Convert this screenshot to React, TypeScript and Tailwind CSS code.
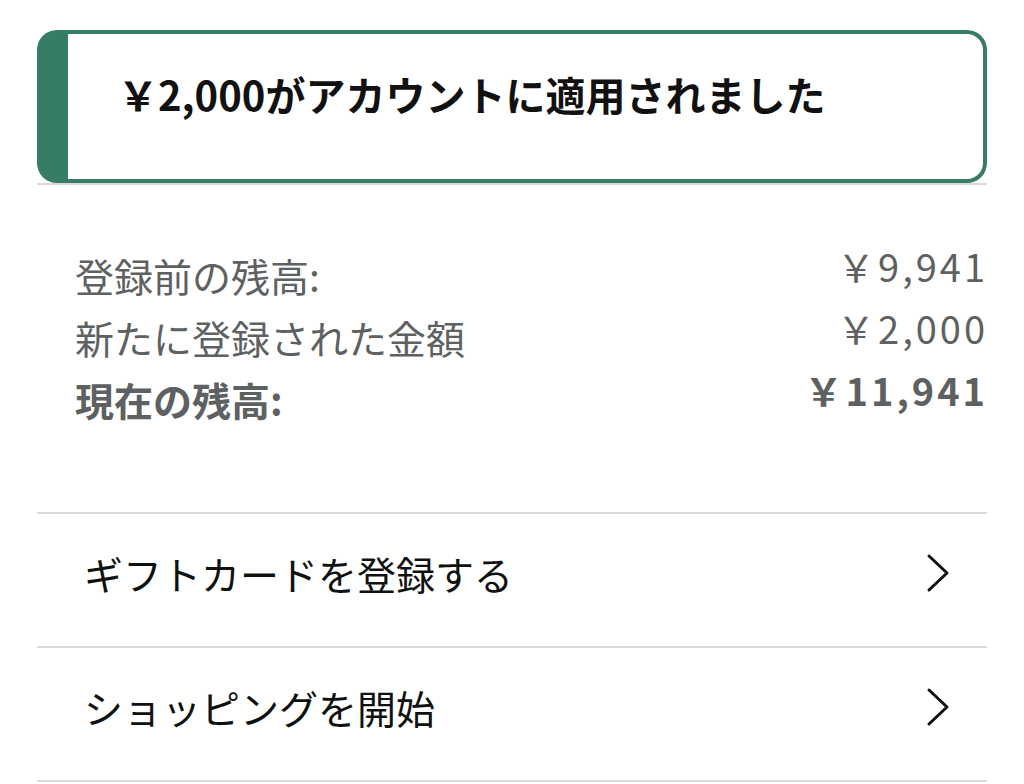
import { ReactNode } from 'react';

const font = { fontFamily: '"Noto Sans CJK JP", "Noto Sans", sans-serif' };

function Chevron() {
  return (
    <svg width="24" height="40" viewBox="0 0 24 40" fill="none" className="shrink-0">
      <polyline
        points="3,3 21,20 3,37"
        stroke="#0f1111"
        strokeWidth="3"
        strokeLinecap="round"
        strokeLinejoin="round"
      />
    </svg>
  );
}

function SummaryRow({ label, value, bold }: { label: string; value: string; bold?: boolean }) {
  return (
    <div className={`flex items-start justify-between text-[#5d6161] ${bold ? 'font-bold' : ''}`}>
      <span className="text-[39px] leading-[62px]">{label}</span>
      <span className="text-[38px] leading-[44px] tracking-[3px] -mr-[1px]">{value}</span>
    </div>
  );
}

function LinkRow({ children }: { children: ReactNode }) {
  return (
    <div className="flex h-[134px] items-center justify-between pl-[47px] pr-[37px] pb-[14px] border-b-2 border-[#d5d9d9]">
      <span className="text-[39px] text-[#0f1111]">{children}</span>
      <Chevron />
    </div>
  );
}

export default function App() {
  return (
    <div className="min-h-[784px] bg-white px-[37px] pt-[30px]" style={font}>
      {/* Alert box */}
      <div className="rounded-[20px] border-4 border-l-[31px] border-[#367c66] bg-white pl-[50px] pt-[30px] pb-[55px]">
        <p className="text-[40px] font-bold leading-[60px] text-[#111111]">￥2,000がアカウントに適用されました</p>
      </div>
      <div className="h-[2px] bg-[#d5d9d9]" />

      {/* Balance summary */}
      <div className="pl-[38px] pt-[59px] pb-[82px]">
        <SummaryRow label="登録前の残高:" value="￥9,941" />
        <SummaryRow label="新たに登録された金額" value="￥2,000" />
        <SummaryRow label="現在の残高:" value="￥11,941" bold />
      </div>

      {/* Links */}
      <div className="border-t-2 border-[#d5d9d9]">
        <LinkRow>ギフトカードを登録する</LinkRow>
        <LinkRow>ショッピングを開始</LinkRow>
      </div>
    </div>
  );
}
